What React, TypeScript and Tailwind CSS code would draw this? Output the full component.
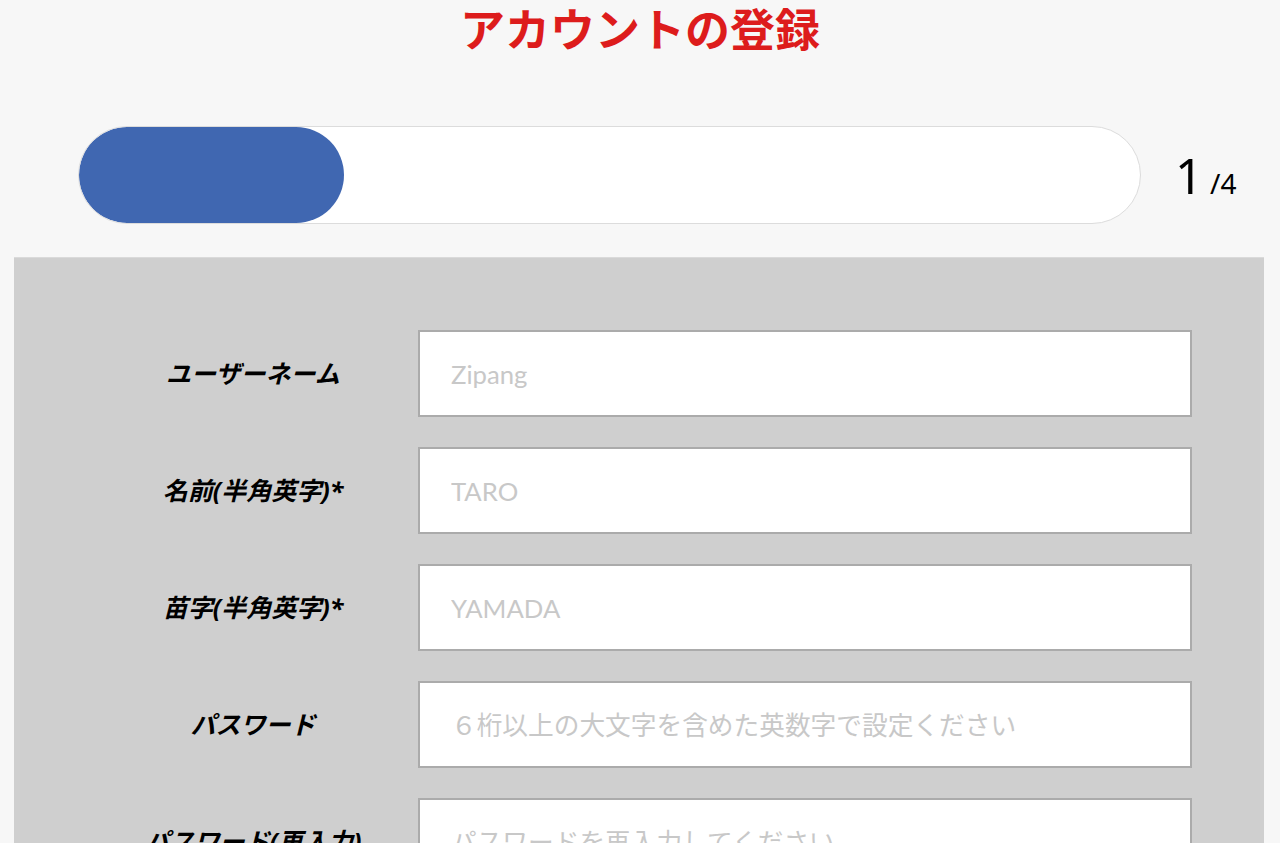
import React from "react";

const jp = "font-['Noto_Sans','Noto_Sans_CJK_JP',sans-serif]";

const fields = [
  { label: "ユーザーネーム", placeholder: "Zipang", type: "text" },
  { label: "名前(半角英字)*", placeholder: "TARO", type: "text" },
  { label: "苗字(半角英字)*", placeholder: "YAMADA", type: "text" },
  { label: "パスワード", placeholder: "６桁以上の大文字を含めた英数字で設定ください", type: "password" },
  { label: "パスワード(再入力)", placeholder: "パスワードを再入力してください", type: "password" },
];

function ProgressBar({ step, total }: { step: number; total: number }) {
  return (
    <div className="flex items-center pt-[66px] pl-[78px]">
      <div className="w-[1063px] h-[98px] rounded-full bg-white border border-[#dcdcdc] overflow-hidden">
        <div className="h-full rounded-full bg-[#4067b1]" style={{ width: `${(step / total) * 100}%` }} />
      </div>
      <div className={`ml-[34px] flex items-baseline text-black ${jp}`}>
        <span className="text-[49px] leading-none">{step}</span>
        <span className="ml-[7px] text-[28px] leading-none">/{total}</span>
      </div>
    </div>
  );
}

export default function App() {
  return (
    <div className={`min-h-[843px] bg-[#f7f7f7] ${jp}`}>
      <h1 className="text-center text-[#dd1c1c] text-[45px] font-bold leading-[60px]">
        アカウントの登録
      </h1>

      <ProgressBar step={1} total={4} />

      <div className="ml-[14px] mr-[16px] mt-[33px] bg-[#cfcfcf] border-t border-[#dadada] pt-[72px] pb-[60px] pl-[74px] pr-[72px] flex flex-col gap-[30px]">
        {fields.map(f => (
          <div key={f.label} className="flex items-center">
            <label className="w-[330px] text-center text-[25px] font-bold italic text-black">
              {f.label}
            </label>
            <input
              type={f.type}
              placeholder={f.placeholder}
              className="flex-1 h-[87px] bg-white border-2 border-[#ababab] px-[31px] text-[25.7px] text-black placeholder:text-[#c8c8c8] outline-none font-['Lato','Noto_Sans_CJK_JP',sans-serif]"
            />
          </div>
        ))}
      </div>
    </div>
  );
}
